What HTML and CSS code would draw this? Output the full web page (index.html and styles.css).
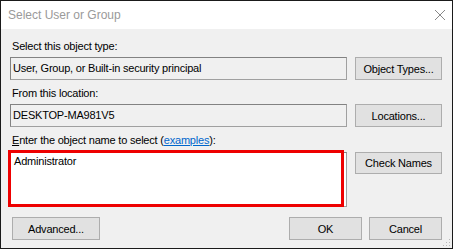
FILE: index.html
```html
<!DOCTYPE html>
<html>
<head>
<meta charset="utf-8">
<link rel="stylesheet" href="styles.css">
</head>
<body>
<div class="dialog">
  <div class="titlebar">
    <span class="title">Select User or Group</span>
    <svg class="close" width="12" height="12" viewBox="0 0 12 12"><path d="M1 1 L11 11 M11 1 L1 11" stroke="#888" stroke-width="1" fill="none"/></svg>
  </div>
  <div class="content">
    <div class="label">Select this object type:</div>
    <div class="row">
      <div class="field">User, Group, or Built-in security principal</div>
      <button class="btn side">Object Types...</button>
    </div>
    <div class="label">From this location:</div>
    <div class="row">
      <div class="field">DESKTOP-MA981V5</div>
      <button class="btn side">Locations...</button>
    </div>
    <div class="label"><u>E</u>nter the object name to select (<a class="link">examples</a>):</div>
    <div class="row top">
      <div class="namewrap">
        <div class="names">Administrator</div>
        <div class="highlight"></div>
      </div>
      <button class="btn side">Check Names</button>
    </div>
    <div class="footer">
      <button class="btn adv">Advanced...</button>
      <div class="spacer"></div>
      <button class="btn ok">OK</button>
      <button class="btn cancel">Cancel</button>
    </div>
  </div>
  <svg class="grip" width="8" height="8" viewBox="0 0 8 8">
    <rect x="6" y="0" width="1" height="1" fill="#b8b8b8"/>
    <rect x="3" y="3" width="1" height="1" fill="#b8b8b8"/>
    <rect x="6" y="3" width="1" height="1" fill="#b8b8b8"/>
    <rect x="0" y="6" width="1" height="1" fill="#b8b8b8"/>
    <rect x="3" y="6" width="1" height="1" fill="#b8b8b8"/>
    <rect x="6" y="6" width="1" height="1" fill="#b8b8b8"/>
  </svg>
</div>
</body>
</html>
```

FILE: styles.css
```css
html, body {
  margin: 0;
  padding: 0;
  background: #f0f0f0;
}
.dialog {
  position: relative;
  width: 453px;
  height: 249px;
  box-sizing: border-box;
  border: 1px solid #1a1a1a;
  background: #f0f0f0;
  font-family: "Liberation Sans", Arial, sans-serif;
  font-size: 11px;
  letter-spacing: -0.2px;
  color: #000;
  overflow: hidden;
}
.titlebar {
  height: 28px;
  background: #fff;
  display: flex;
  align-items: center;
  justify-content: space-between;
  padding: 0 6px 0 7px;
}
.title {
  font-family: "Liberation Sans", Arial, sans-serif;
  font-size: 12px;
  letter-spacing: 0;
  color: #9a9a9a;
}
.close {
  display: block;
  margin-top: -1px;
}
.content {
  padding: 11px 10px 0 9px;
  display: flex;
  flex-direction: column;
}
.label {
  height: 13px;
  line-height: 13px;
  padding-left: 2px;
  margin-bottom: 4px;
}
.row {
  display: flex;
  gap: 8px;
  align-items: center;
  margin-bottom: 7px;
}
.row.top {
  align-items: flex-start;
  margin-top: 1px;
}
.field {
  flex: 1;
  height: 23px;
  box-sizing: border-box;
  border: 1px solid #a0a0a0;
  border-top-color: #828282;
  border-left-color: #828282;
  background: #f0f0f0;
  padding: 0 2px;
  line-height: 21px;
  white-space: nowrap;
}
.btn {
  font-family: "Liberation Sans", Arial, sans-serif;
  font-size: 11px;
  letter-spacing: -0.2px;
  color: #000;
  background: #e1e1e1;
  border: 1px solid #adadad;
  height: 23px;
  box-sizing: border-box;
  padding: 0;
  margin: 0;
}
.side {
  width: 87px;
  flex: none;
}
.row.top .side {
  height: 22px;
}
.link {
  color: #0066cc;
  text-decoration: underline;
}
.namewrap {
  flex: 1;
  position: relative;
}
.names {
  height: 55px;
  box-sizing: border-box;
  background: #fff;
  border: 1px solid #a0a0a0;
  border-top-color: #828282;
  border-left-color: #828282;
  padding: 2px 3px;
}
.highlight {
  position: absolute;
  left: -2px;
  top: -2px;
  right: 3px;
  bottom: 0;
  border: 3px solid #ee0000;
  pointer-events: none;
}
.footer {
  display: flex;
  gap: 7px;
  margin-top: 3px;
  padding-left: 2px;
}
.spacer {
  flex: 1;
}
.adv {
  width: 88px;
}
.ok {
  width: 73px;
}
.cancel {
  width: 73px;
}
.grip {
  position: absolute;
  right: 1px;
  bottom: 1px;
}
```
